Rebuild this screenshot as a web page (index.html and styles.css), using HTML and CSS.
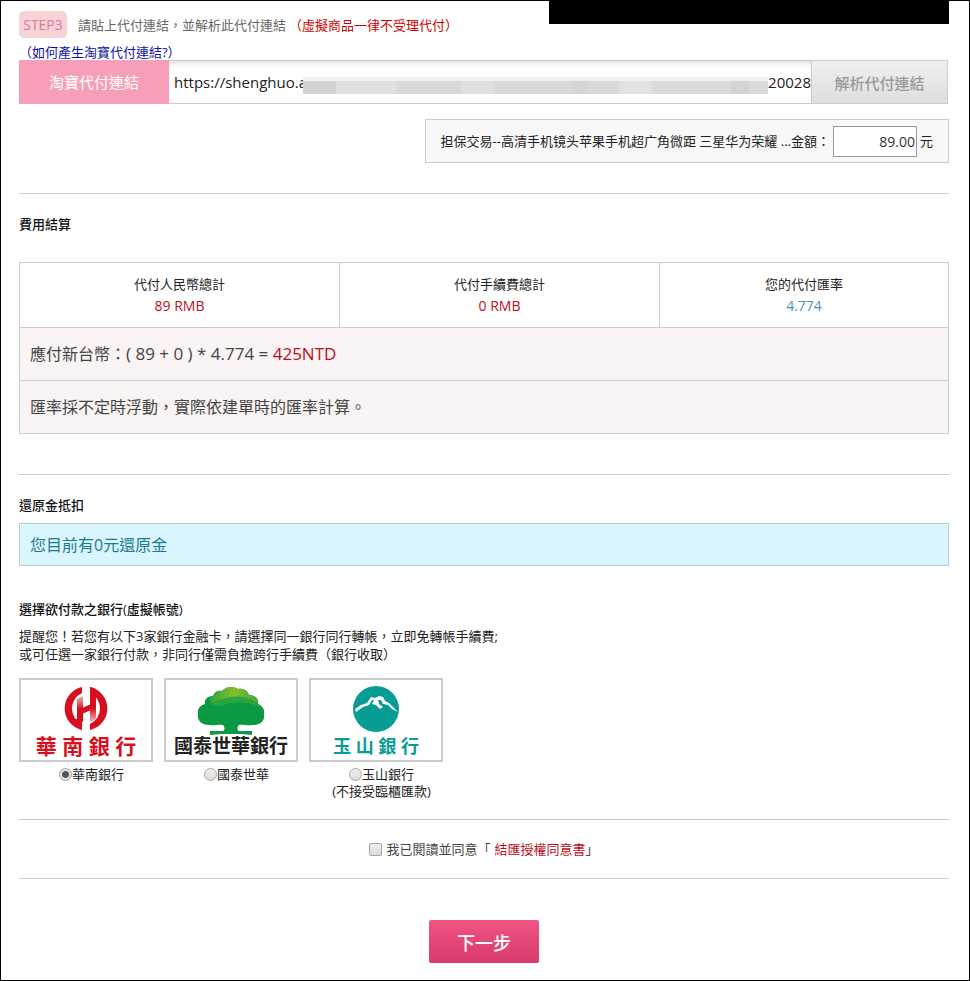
FILE: index.html
```html
<!DOCTYPE html>
<html lang="zh-Hant">
<head>
	<meta charset="UTF-8">
	<meta name="viewport" content="width=device-width,initial-scale=1">
	<title>淘寶代付</title>
	<link rel="stylesheet" href="styles.css">
</head>
<body>
<form class="page" action="#" method="post">
	<div class="mask"></div>
	<!-- 步驟三 -->
	<div class="step">
		<span class="step-tag">STEP3</span>
		<span class="step-txt">請貼上代付連結，並解析此代付連結</span>
		<span class="step-warn">（虛擬商品一律不受理代付）</span>
	</div>
	<a class="how" href="#">（如何產生淘寶代付連結?）</a>
	<div class="link-bar">
		<label class="link-label" for="payurl">淘寶代付連結</label>
		<div class="link-field">
			<input type="text" class="link-input" id="payurl" value="https://shenghuo.a">
			<span class="mosaic"></span>
			<span class="link-tail">20028</span>
		</div>
		<button type="button" class="link-btn">解析代付連結</button>
	</div>
	<div class="item">
		<label for="amount">担保交易--高清手机镜头苹果手机超广角微距 三星华为荣耀 ...金額：</label>
		<input type="text" class="amount" id="amount" value="89.00">
		<span>元</span>
	</div>

	<!-- 費用結算 -->
	<section class="fee">
		<h3>費用結算</h3>
		<table class="fee-table">
			<colgroup><col class="c1"><col class="c1"><col></colgroup>
			<tr>
				<td>代付人民幣總計<b class="red">89 RMB</b></td>
				<td>代付手續費總計<b class="red">0 RMB</b></td>
				<td>您的代付匯率<b class="blue">4.774</b></td>
			</tr>
			<tr class="sum">
				<td colspan="3">應付新台幣：<span class="calc">( 89 + 0 ) * 4.774 = <span class="red">425NTD</span></span></td>
			</tr>
			<tr class="sum">
				<td colspan="3">匯率採不定時浮動，實際依建單時的匯率計算。</td>
			</tr>
		</table>
	</section>

	<!-- 還原金 -->
	<section class="refund">
		<h3>還原金抵扣</h3>
		<p class="refund-box">您目前有0元還原金</p>
	</section>

	<!-- 銀行 -->
	<section class="bank">
		<h3>選擇欲付款之銀行(虛擬帳號)</h3>
		<p class="bank-tip">提醒您！若您有以下3家銀行金融卡，請選擇同一銀行同行轉帳，立即免轉帳手續費;<br>或可任選一家銀行付款，非同行僅需負擔跨行手續費（銀行收取）</p>
		<div class="bank-list">
			<label class="bank-item">
				<span class="logo logo-hn">
					<svg width="46" height="46" viewBox="0 0 46 46">
						<defs>
							<linearGradient id="stem1" x1="0" y1="0" x2="0" y2="1">
								<stop offset="0" stop-color="#d7101f" stop-opacity=".3"/>
								<stop offset=".5" stop-color="#d7101f"/>
							</linearGradient>
							<linearGradient id="stem2" x1="0" y1="0" x2="0" y2="1">
								<stop offset=".5" stop-color="#d7101f"/>
								<stop offset="1" stop-color="#d7101f" stop-opacity=".3"/>
							</linearGradient>
						</defs>
						<path fill="#d7101f" d="M19 1A22 22 0 0 0 19 44V38A17 17 0 0 1 19 7Z"/>
						<path fill="#d7101f" d="M27 1A22 22 0 0 1 27 44V38A17 17 0 0 0 27 7Z"/>
						<path fill="url(#stem1)" d="M14 13L20 10V36L14 34Z"/>
						<path fill="#d7101f" d="M13 33H19V44L13 41ZM27 1L33 3V12H27Z"/>
						<path fill="#d7101f" d="M19 22L28 18V24L19 28Z"/>
						<path fill="url(#stem2)" d="M27 8L33 11V33L27 36Z"/>
					</svg>
					<em>華 南 銀 行</em>
				</span>
				<span class="pick"><input type="radio" name="bank" checked>華南銀行</span>
			</label>
			<label class="bank-item">
				<span class="logo logo-gt">
					<svg width="68" height="50" viewBox="0 0 68 50">
						<defs>
							<linearGradient id="leaf" x1="0" y1="0" x2="1" y2="0">
								<stop offset="0" stop-color="#2fa43c"/>
								<stop offset=".5" stop-color="#86bd2c"/>
								<stop offset="1" stop-color="#3fab3a"/>
							</linearGradient>
						</defs>
						<path fill="#0b9a43" d="M12 39C4 39 0 34 1 28C0 22 4 19 8 18C7 13 11 10 16 10C17 6 21 4 25 5C29 0 37 0 41 3C46 2 51 5 52 9C58 9 62 13 61 18C66 20 68 24 67 29C68 35 63 39 56 39C50 40 46 38 42 39C40 41 40 44 42 45H55V49L44 48H24L13 49V45H26C28 44 28 41 26 39C22 38 18 40 12 39Z"/>
						<path fill="url(#leaf)" d="M16 10C17 6 21 4 25 5C29 0 37 0 41 3C46 2 51 5 52 9C58 9 62 13 61 18C50 9 34 8 14 18C12 15 12 11 16 10Z"/>
						<path fill="#2ba63f" d="M14 18C34 8 50 9 61 18C63 19 65 21 66 23C56 16 40 14 22 20Z"/>
					</svg>
					<em>國泰世華銀行</em>
				</span>
				<span class="pick"><input type="radio" name="bank">國泰世華</span>
			</label>
			<label class="bank-item">
				<span class="logo logo-ys">
					<svg width="46" height="46" viewBox="0 0 46 46">
						<circle cx="23" cy="23" r="23" fill="#079c94"/>
						<path fill="#fff" d="M2 23L8 19L14 17L18 11L22 12L26 10L30 11L32 15L36 17L40 21L45 26L39 23L35 19L30 18L28 14L25 14L26 18L30 21L27 23L23 19L19 18L21 14L19 14L16 19L10 21L3 26Z"/>
					</svg>
					<em>玉 山 銀 行</em>
				</span>
				<span class="pick"><input type="radio" name="bank">玉山銀行</span>
				<span class="note">(不接受臨櫃匯款)</span>
			</label>
		</div>
	</section>

	<div class="agree">
		<input type="checkbox" id="agree">
		<label for="agree">我已閱讀並同意「</label>
		<a href="#">結匯授權同意書</a><span>」</span>
	</div>
	<div class="next">
		<button type="submit">下一步</button>
	</div>
</form>
</body>
</html>
```

FILE: styles.css
```css
*{
	margin: 0;
	padding: 0;
	box-sizing: border-box;
}
body{
	background: #fff;
	color: #222;
	font: 13px/18px "Open Sans", "Noto Sans CJK TC", sans-serif;
}
input, button{
	font-family: inherit;
}
a{
	text-decoration: none;
}
.page{
	position: relative;
	min-height: 100vh;
	padding: 10px 20px 16px 18px;
	border: 1px solid #000;
}
.mask{
	position: absolute;
	top: 0;
	right: 20px;
	width: 400px;
	height: 23px;
	background: #000;
}
/*步驟*/
.step{
	display: flex;
	align-items: center;
	height: 27px;
	color: #666;
}
.step-tag{
	width: 48px;
	margin-right: 11px;
	border-radius: 5px;
	background: #f5d3d6;
	color: #e3779b;
	font-size: 14px;
	line-height: 27px;
	text-align: center;
}
.step-warn{
	margin-left: 3px;
	color: #c00;
}
.how{
	display: block;
	height: 22px;
	line-height: 28px;
	color: #1010a0;
}
.link-bar{
	display: flex;
	height: 44px;
	margin-right: 1px;
}
.link-label{
	width: 150px;
	background: #f79fb8;
	color: #fff;
	font-size: 15px;
	line-height: 44px;
	text-align: center;
}
.link-field{
	flex: 1;
	display: flex;
	align-items: center;
	min-width: 0;
	border: solid #ccc;
	border-width: 1px 0;
	box-shadow: inset 0 4px 5px -2px #ddd;
	overflow: hidden;
}
.link-input{
	width: 134px;
	height: 40px;
	padding-left: 5px;
	border: 0;
	outline: 0;
	background: transparent;
	color: #222;
	font-size: 15px;
}
.mosaic{
	flex: 1;
	height: 17px;
	margin-top: 7px;
	border-top: 4px solid #f1f1f1;
	background: linear-gradient(90deg, #d2d2d2 7%, #dfe0df 7%, #dfe0df 20%, #d8dad7 20%, #d8dad7 34%, #dfe0df 34%, #dfe0df 41%, #d9d9d9 41%, #d9d9d9 58%, #d5d6d4 58%, #d5d6d4 61%, #d9dad7 61%, #d9dad7 68%, #e2e3e0 68%, #e2e3e0 75%, #dadbdb 75%, #dadbdb 92%, #d2d5d2 92%, #d2d5d2 96%, #dadbda 96%) padding-box;
}
.link-tail{
	color: #222;
	font-size: 15px;
}
.link-btn{
	width: 137px;
	border: 1px solid #ccc;
	background: linear-gradient(#f0f0f0, #dedede);
	color: #999;
	font-size: 15px;
	font-weight: 500;
}
.item{
	display: flex;
	align-items: center;
	justify-content: flex-end;
	gap: 3px;
	width: fit-content;
	height: 44px;
	margin: 15px 0 30px auto;
	padding: 0 15px;
	border: 1px solid #ccc;
	background: #f8f8f8;
}
.amount{
	width: 84px;
	height: 31px;
	padding-right: 1px;
	border: 1px solid #999;
	color: #333;
	font-size: 14px;
	text-align: right;
}
h3{
	color: #111;
	font-size: 13px;
	font-weight: 500;
	line-height: 18px;
}
/*費用*/
.fee{
	padding: 21px 0 40px;
	border-top: 1px solid #ccc;
}
.fee-table{
	width: 100%;
	margin-top: 29px;
	border-collapse: collapse;
	table-layout: fixed;
}
.c1{
	width: 320px;
}
.fee-table td{
	height: 65px;
	border: 1px solid #ccc;
	line-height: 22px;
	text-align: center;
}
.fee-table b{
	display: block;
	font-size: 14px;
	font-weight: normal;
}
.fee-table .sum td{
	height: 53px;
	padding: 0 10px;
	background: #fbf4f4;
	color: #444;
	font-size: 16px;
	text-align: left;
}
.calc{
	font-size: 17px;
}
.red{
	color: #b80f1a;
}
.blue{
	color: #4796b0;
}
/*還原金*/
.refund{
	padding: 21px 0 34px;
	border-top: 1px solid #ccc;
}
.refund-box{
	margin-top: 9px;
	padding: 1px 0 0 10px;
	border: 1px solid #b5cfd6;
	background: #d9f6fe;
	color: #1b7b91;
	font-size: 16px;
	line-height: 40px;
}
/*銀行*/
.bank{
	padding-bottom: 19px;
	border-bottom: 1px solid #ccc;
}
.bank-tip{
	margin: 9px 0 15px;
}
.bank-list{
	display: flex;
}
.bank-item{
	width: 145px;
	line-height: 17px;
	text-align: center;
}
.logo{
	display: flex;
	flex-direction: column;
	align-items: center;
	width: 134px;
	height: 84px;
	padding-top: 6px;
	border: 2px solid #ccc;
}
.logo em{
	font-style: normal;
	font-weight: bold;
	white-space: nowrap;
}
.logo-hn em{
	color: #d7101f;
	font-size: 21px;
	line-height: 28px;
}
.logo-gt em{
	color: #222;
	font-size: 19px;
	line-height: 20px;
}
.logo-ys em{
	color: #079c94;
	font-size: 18px;
	line-height: 28px;
}
.pick{
	display: flex;
	align-items: center;
	justify-content: center;
	margin-top: 4px;
}
.pick input, .agree input{
	appearance: none;
	width: 13px;
	height: 13px;
	border: 1px solid #a5a5a5;
	background: linear-gradient(#eee, #dcdcdc);
}
.pick input{
	border-radius: 50%;
}
.pick input:checked{
	background: radial-gradient(#555 0, #555 3px, #e4e4e4 4px);
}
.note{
	display: block;
}
/*同意*/
.agree{
	display: flex;
	align-items: center;
	justify-content: center;
	height: 59px;
	border-bottom: 1px solid #ccc;
	color: #444;
}
.agree input{
	margin-right: 4px;
	border-radius: 2px;
}
.agree a{
	margin-left: 4px;
	color: #b80f1a;
}
.next{
	padding-top: 41px;
	text-align: center;
}
.next button{
	width: 110px;
	height: 43px;
	border: 0;
	border-radius: 2px;
	background: linear-gradient(#f05583, #d93a6c);
	color: #fff;
	font-size: 18px;
	font-weight: 500;
}
```
